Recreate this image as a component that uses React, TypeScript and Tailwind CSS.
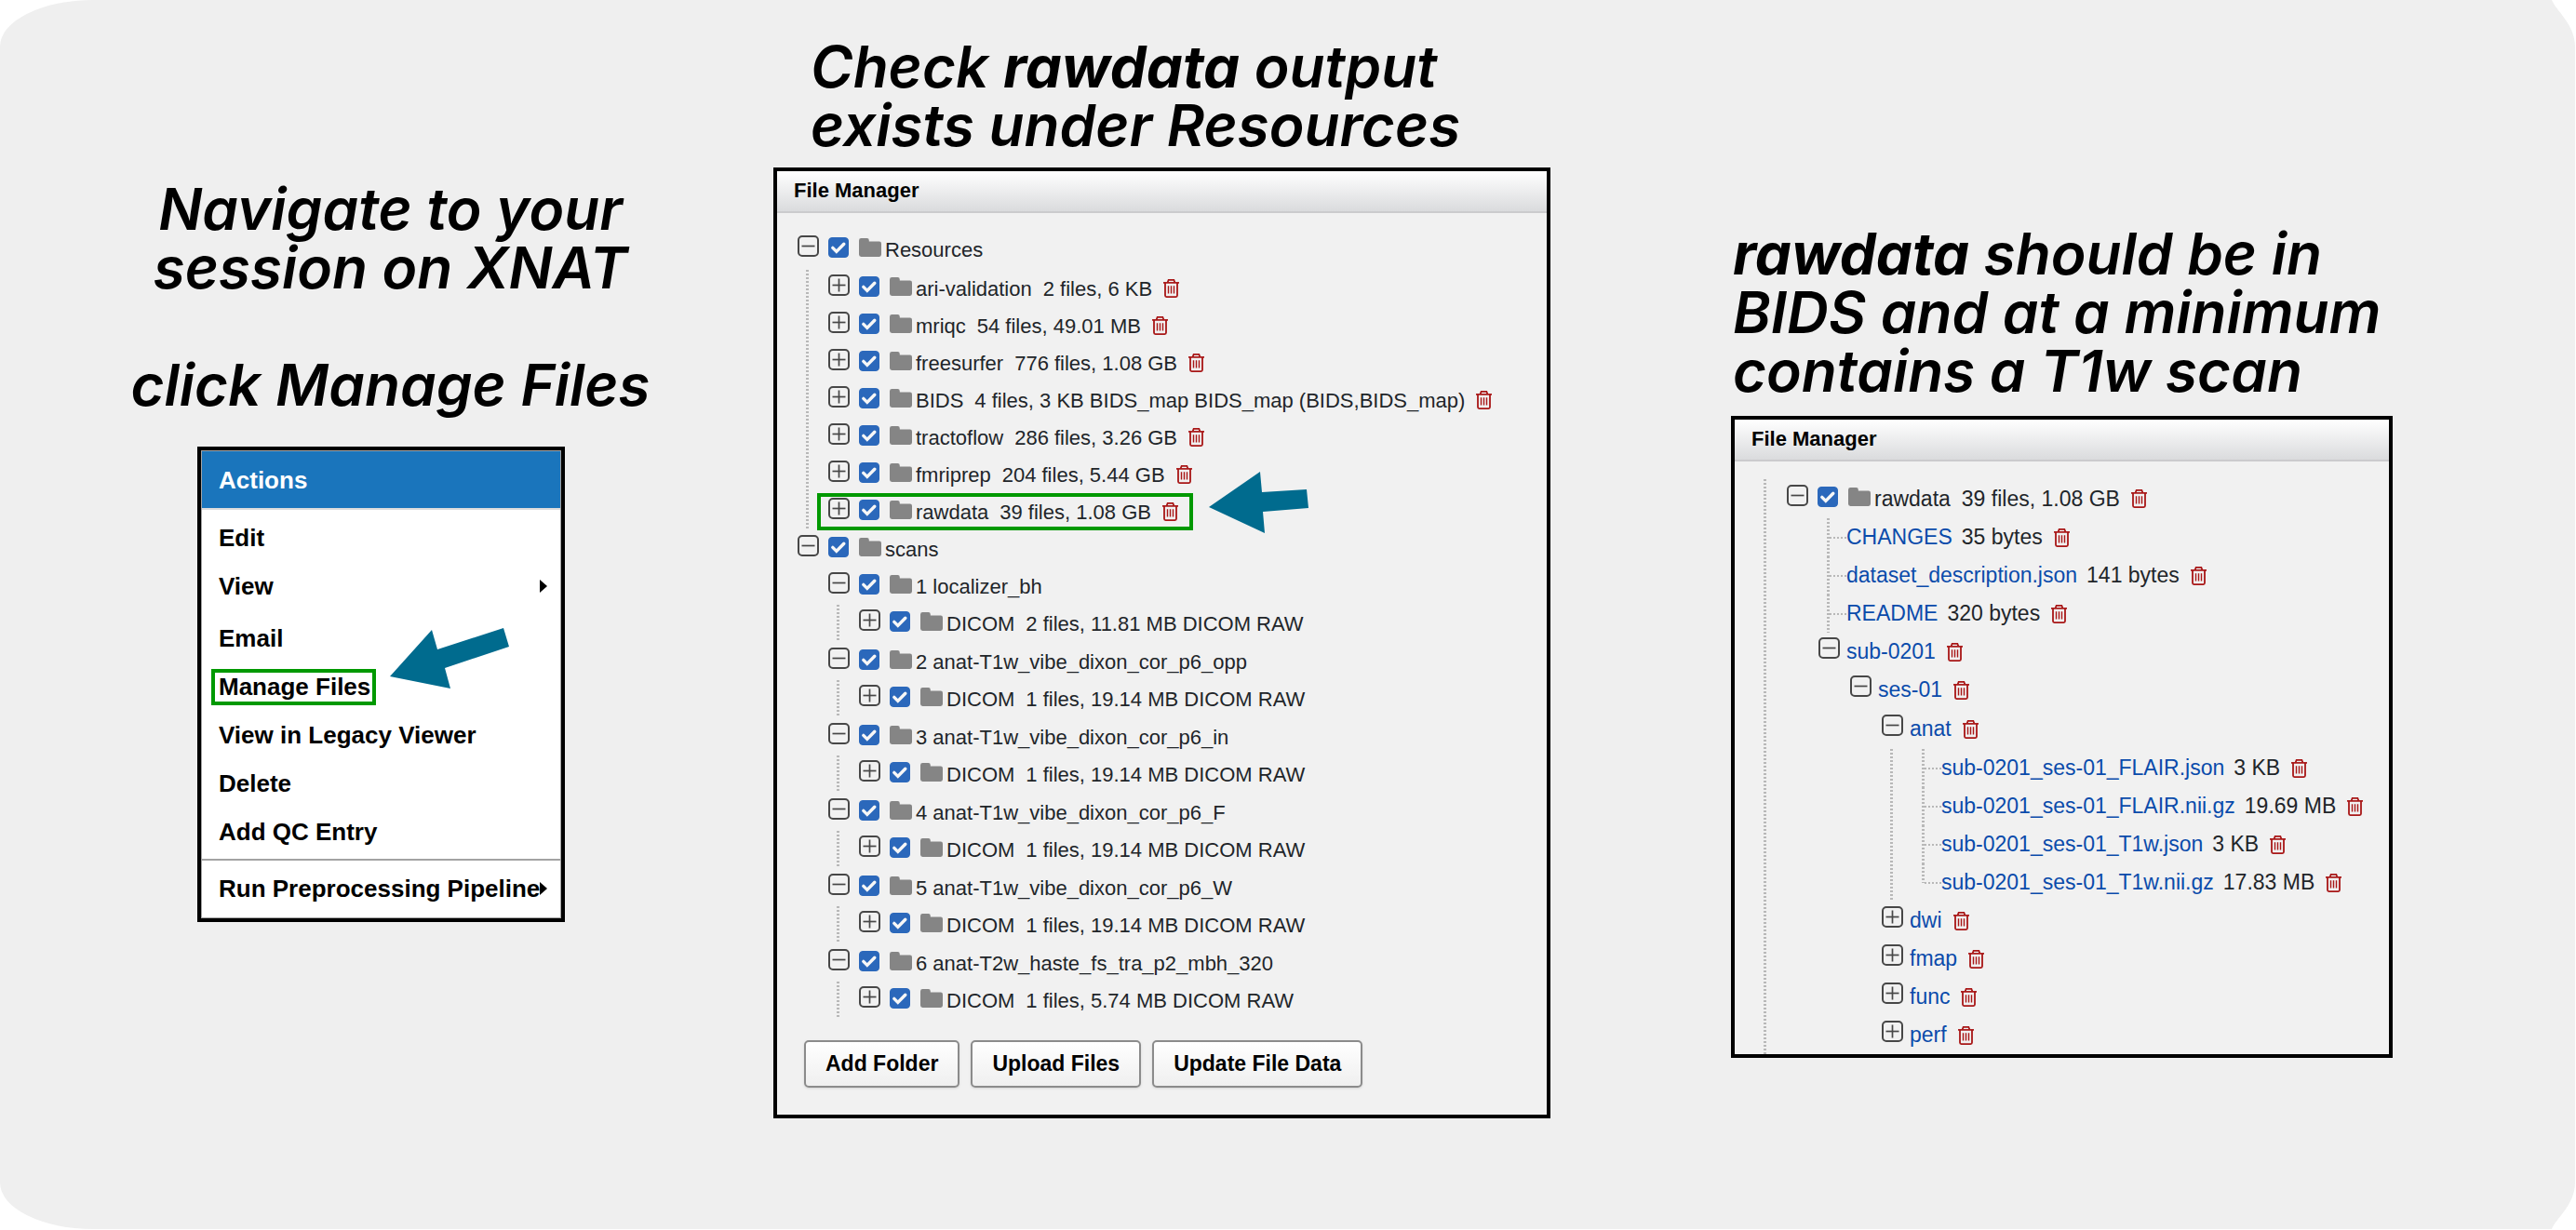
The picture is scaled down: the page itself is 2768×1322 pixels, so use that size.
import type { ReactNode } from "react";

const SANS = "font-['Liberation_Sans',Arial,sans-serif]";
const DOTS_V =
  "bg-[repeating-linear-gradient(to_bottom,#b8b8b8_0px,#b8b8b8_2px,transparent_2px,transparent_4px)]";
const DOTS_H =
  "bg-[repeating-linear-gradient(to_right,#b8b8b8_0px,#b8b8b8_2px,transparent_2px,transparent_4px)]";
const HEADING = "whitespace-nowrap text-[62px] font-semibold italic leading-[63px]";

function Toggle({ open, name }: { open: boolean; name: string }) {
  return (
    <button type="button" aria-expanded={open} aria-label={`Toggle ${name}`} className="mb-2 shrink-0">
      <svg width="23" height="23" viewBox="0 0 23 23" fill="none" stroke="#474747" className="block">
        <rect x="1" y="1" width="21" height="21" rx="4" strokeWidth="2" />
        <path d="M4.5 11.5h14" strokeWidth="1.7" />
        {!open && <path d="M11.5 4.5v14" strokeWidth="1.7" />}
      </svg>
    </button>
  );
}

function Check({ name }: { name: string }) {
  return (
    <span className="mb-1 ml-[10px] grid shrink-0">
      <input
        type="checkbox"
        defaultChecked
        aria-label={`Select ${name}`}
        className="peer col-start-1 row-start-1 size-[22px] appearance-none rounded-[4px] border border-[#8a8a8a] bg-white checked:border-[#2b68bb] checked:bg-[#2b68bb]"
      />
      <svg
        width="22"
        height="22"
        viewBox="0 0 22 22"
        fill="none"
        stroke="#f7f7f7"
        strokeWidth="3.4"
        strokeLinecap="round"
        className="pointer-events-none invisible col-start-1 row-start-1 peer-checked:visible"
      >
        <path d="M4.8 11.4L8.8 15.4L16.8 7.2" />
      </svg>
    </span>
  );
}

function Folder() {
  return (
    <svg width="24" height="20" viewBox="0 0 24 20" fill="#858585" className="mb-1 ml-[11px] mr-1 shrink-0">
      <path d="M2.4 0H8.6Q10.8 0 10.8 2.2V3.6H21.8Q24 3.6 24 5.8V17.6Q24 20 21.8 20H2.4Q0 20 0 17.6V2.4Q0 0 2.4 0Z" />
    </svg>
  );
}

function Trash({ name }: { name: string }) {
  return (
    <button type="button" aria-label={`Delete ${name}`} className="ml-3 shrink-0">
      <svg width="17" height="20" viewBox="0 0 17 20" fill="none" stroke="#a81616" className="block">
        <path d="M0 3.9H17" strokeWidth="1.7" />
        <path d="M4.6 3.6L5.6 0.9H11.4L12.4 3.6" strokeWidth="1.7" />
        <path d="M2 4V17.6Q2 19.1 3.5 19.1H13.5Q15 19.1 15 17.6V4" strokeWidth="1.8" />
        <path d="M5.5 7.2V15.6M8.5 7.2V15.6M11.5 7.2V15.6" strokeWidth="1.4" />
      </svg>
    </button>
  );
}

type Entry = {
  name: string;
  info?: string;
  open?: boolean;
  trash?: boolean;
  mark?: boolean;
};

/* A folder that can be ticked */
function FolderRow({ name, info, open = false, trash, mark }: Entry) {
  return (
    <div className="relative flex h-10 w-max items-center whitespace-nowrap">
      <Toggle open={open} name={name} />
      <Check name={name} />
      <Folder />
      <span>{name}</span>
      {info && <span className="ml-3">{info}</span>}
      {trash && <Trash name={name} />}
      {mark && (
        <span className="pointer-events-none absolute inset-y-0 -left-3 -right-4 border-4 border-[#009900]" />
      )}
    </div>
  );
}

function LinkFolderRow({ name, open = false }: Entry) {
  return (
    <div className="flex h-[41px] w-max items-center whitespace-nowrap">
      <Toggle open={open} name={name} />
      <a href="#" className="ml-[7px] text-[#0a4bab]">
        {name}
      </a>
      <Trash name={name} />
    </div>
  );
}

function FileRow({ name, info, last }: Entry & { last?: boolean }) {
  return (
    <li className="flex h-[41px] w-max items-center whitespace-nowrap pl-[9px]">
      <span className={`w-[3px] self-start ${DOTS_V} ${last ? "h-[21px]" : "h-full"}`} />
      <span className={`h-[2px] w-[18px] ${DOTS_H}`} />
      <a href="#" className="text-[#0a4bab]">
        {name}
      </a>
      <span className="ml-[10px]">{info}</span>
      <Trash name={name} />
    </li>
  );
}

function PanelHeader() {
  return (
    <h2 className="h-[45px] border-b-2 border-[#cbcbcd] bg-linear-to-b from-white to-[#dadbdd] pl-[18px] text-[22px] font-bold leading-[42px] text-black">
      File Manager
    </h2>
  );
}

function Arrow({ points, className }: { points: string; className: string }) {
  return (
    <svg width="130" height="70" viewBox="0 0 130 70" className={`pointer-events-none absolute ${className}`}>
      <polygon points={points} fill="#006b8e" />
    </svg>
  );
}

function MenuItem({ children, submenu, marked }: { children: ReactNode; submenu?: boolean; marked?: boolean }) {
  return (
    <button
      type="button"
      className="flex h-[52px] w-full items-center justify-between whitespace-nowrap pl-[18px] pr-[14px] text-left"
    >
      <span className="relative">
        {children}
        {marked && <span className="absolute -left-2 -right-[6px] inset-y-0 border-4 border-[#009900]" />}
      </span>
      {submenu && (
        <svg width="8" height="14" viewBox="0 0 8 14" className="shrink-0">
          <path d="M0 0L8 7L0 14Z" fill="#000" />
        </svg>
      )}
    </button>
  );
}

function ActionsMenu() {
  return (
    <nav
      aria-label="Actions"
      className={`relative mr-3 mt-[35px] w-[395px] border-4 border-black bg-white text-[26px] font-bold text-black ${SANS}`}
    >
      <div className="border border-[#a3a3a3]">
        <h2 className="h-[63px] border-b-2 border-[#dcdcdc] bg-[#1a75bc] pl-[18px] leading-[62px] text-white">
          Actions
        </h2>
        <div className="pt-1">
          <MenuItem>Edit</MenuItem>
          <div className="mb-1">
            <MenuItem submenu>View</MenuItem>
          </div>
          <MenuItem>Email</MenuItem>
          <MenuItem marked>Manage Files</MenuItem>
          <MenuItem>View in Legacy Viewer</MenuItem>
          <MenuItem>Delete</MenuItem>
          <MenuItem>Add QC Entry</MenuItem>
        </div>
        <div className="mt-[3px] border-t-2 border-[#a3a3a3] pb-[5px] pt-1">
          <MenuItem submenu>Run Preprocessing Pipeline</MenuItem>
        </div>
      </div>
      <Arrow className="left-[202px] top-[190px]" points="1,53 46,3 52,24 123,1 129,21 60,44 66,66" />
    </nav>
  );
}

const resources: Entry[] = [
  { name: "ari-validation", info: "2 files, 6 KB" },
  { name: "mriqc", info: "54 files, 49.01 MB" },
  { name: "freesurfer", info: "776 files, 1.08 GB" },
  { name: "BIDS", info: "4 files, 3 KB BIDS_map BIDS_map (BIDS,BIDS_map)" },
  { name: "tractoflow", info: "286 files, 3.26 GB" },
  { name: "fmriprep", info: "204 files, 5.44 GB" },
  { name: "rawdata", info: "39 files, 1.08 GB", mark: true },
];

const scans = [
  { name: "1 localizer_bh", info: "2 files, 11.81 MB DICOM RAW" },
  { name: "2 anat-T1w_vibe_dixon_cor_p6_opp", info: "1 files, 19.14 MB DICOM RAW" },
  { name: "3 anat-T1w_vibe_dixon_cor_p6_in", info: "1 files, 19.14 MB DICOM RAW" },
  { name: "4 anat-T1w_vibe_dixon_cor_p6_F", info: "1 files, 19.14 MB DICOM RAW" },
  { name: "5 anat-T1w_vibe_dixon_cor_p6_W", info: "1 files, 19.14 MB DICOM RAW" },
  { name: "6 anat-T2w_haste_fs_tra_p2_mbh_320", info: "1 files, 5.74 MB DICOM RAW" },
];

/* Children of a folder, joined by a dotted line under its toggle */
function Branch({ children }: { children: ReactNode }) {
  return (
    <div className="flex pl-[9px]">
      <span className={`w-[3px] shrink-0 ${DOTS_V}`} />
      <ul className="pl-[21px]">{children}</ul>
    </div>
  );
}

function SessionFiles() {
  return (
    <section
      className={`relative mt-[14px] w-full max-w-[835px] border-4 border-black bg-[#f1f1f1] text-[22px] text-[#212529] ${SANS}`}
    >
      <PanelHeader />
      <ul className="pl-[22px] pt-[19px]">
        <li>
          <FolderRow name="Resources" open />
          <div className="pt-[2px]">
            <Branch>
              {resources.map((r) => (
                <li key={r.name}>
                  <FolderRow {...r} trash />
                </li>
              ))}
            </Branch>
          </div>
        </li>
        <li>
          <FolderRow name="scans" open />
          <ul className="space-y-px pl-[33px]">
            {scans.map((s) => (
              <li key={s.name}>
                <FolderRow name={s.name} open />
                <Branch>
                  <li>
                    <FolderRow name="DICOM" info={s.info} />
                  </li>
                </Branch>
              </li>
            ))}
          </ul>
        </li>
      </ul>
      <div className="flex gap-3 pb-[29px] pl-[29px] pt-[23px]">
        {["Add Folder", "Upload Files", "Update File Data"].map((label) => (
          <button
            key={label}
            type="button"
            className="h-[51px] whitespace-nowrap rounded-[5px] border-2 border-[#8b8b8b] bg-linear-to-b from-white to-[#efefef] px-[21px] text-[23px] font-bold text-black shadow-sm"
          >
            {label}
          </button>
        ))}
      </div>
      <Arrow className="left-[462px] top-[321px]" points="2,40 57,2 59,24 107,21 109,41 60,45 62,68" />
    </section>
  );
}

function BidsFiles() {
  return (
    <section
      className={`mt-[17px] w-full max-w-[711px] border-4 border-black bg-[#f1f1f1] text-[23px] text-[#212529] ${SANS}`}
    >
      <PanelHeader />
      <div className="flex pl-[31px]">
        <span className={`mt-[19px] w-[3px] shrink-0 ${DOTS_V}`} />
        <div className="pl-[22px] pt-5">
          <FolderRow name="rawdata" info="39 files, 1.08 GB" open trash />
          <ul className="pl-[34px] pt-px">
            <FileRow name="CHANGES" info="35 bytes" />
            <FileRow name="dataset_description.json" info="141 bytes" />
            <FileRow name="README" info="320 bytes" />
            <li>
              <LinkFolderRow name="sub-0201" open />
              <ul className="pl-[34px]">
                <li>
                  <LinkFolderRow name="ses-01" open />
                  <ul className="pl-[34px] pt-px">
                    <li>
                      <LinkFolderRow name="anat" open />
                      <div className="flex pl-[9px] pt-px">
                        <span className={`w-[3px] shrink-0 ${DOTS_V}`} />
                        <ul className="pl-[22px]">
                          <FileRow name="sub-0201_ses-01_FLAIR.json" info="3 KB" />
                          <FileRow name="sub-0201_ses-01_FLAIR.nii.gz" info="19.69 MB" />
                          <FileRow name="sub-0201_ses-01_T1w.json" info="3 KB" />
                          <FileRow name="sub-0201_ses-01_T1w.nii.gz" info="17.83 MB" last />
                        </ul>
                      </div>
                    </li>
                    {["dwi", "fmap", "func", "perf"].map((name) => (
                      <li key={name}>
                        <LinkFolderRow name={name} />
                      </li>
                    ))}
                  </ul>
                </li>
              </ul>
            </li>
          </ul>
        </div>
      </div>
    </section>
  );
}

export default function App() {
  return (
    <div className="min-h-screen bg-white pb-px pr-px">
      <main className="relative grid min-h-[calc(100vh-1px)] grid-cols-[831fr_1029fr_907fr] items-start rounded-l-[100px_50px] bg-[#efefef] font-['Inter',sans-serif] text-black">
        <svg width="25" height="50" viewBox="0 0 25 50" className="absolute right-0 top-0">
          <path d="M0 0C4 11 25 26 25 50V0Z" fill="#fff" />
        </svg>
        <svg width="25" height="50" viewBox="0 0 25 50" className="absolute bottom-0 right-0">
          <path d="M0 50C4 39 25 24 25 0V50Z" fill="#fff" />
        </svg>

        <div className="flex flex-col items-center pt-[193px]">
          <h1 className={`ml-2 text-center ${HEADING}`}>
            Navigate to your
            <br />
            session on XNAT
            <br />
            <br />
            click Manage Files
          </h1>
          <ActionsMenu />
        </div>

        <div className="pt-10">
          <h1 className={`pl-10 ${HEADING}`}>
            Check <b className="font-bold">rawdata</b> output
            <br />
            exists under Resources
          </h1>
          <SessionFiles />
        </div>

        <div className="pt-[241px]">
          <h1 className={`pl-[2px] ${HEADING}`}>
            <b className="font-bold">rawdata</b> should be in
            <br />
            BIDS and at a minimum
            <br />
            contains a T1w scan
          </h1>
          <BidsFiles />
        </div>
      </main>
    </div>
  );
}
